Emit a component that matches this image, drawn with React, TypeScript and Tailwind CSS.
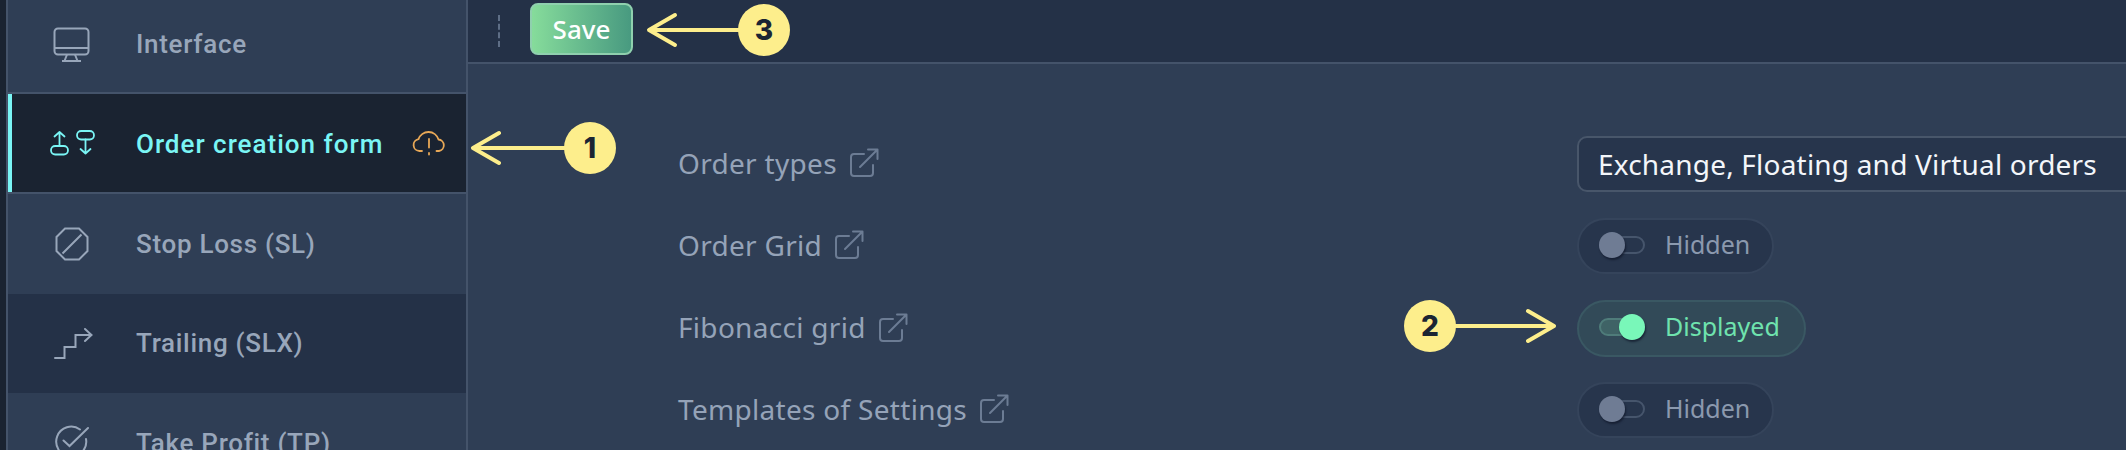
import React from 'react';

const MonitorIcon = () => (
  <svg width="38" height="36" viewBox="0 0 38 36" fill="none" stroke="currentColor" strokeWidth="2" strokeLinejoin="round">
    <rect x="1.500" y="1.500" width="34" height="26" rx="3.500" />
    <path d="M1.500 21h34M14 27.500l-2.500 6.500h13l-2.500-6.500M9 34h19" />
  </svg>
);

const OrderIcon = () => (
  <svg width="46" height="26" viewBox="0 0 46 26" fill="none" stroke="currentColor" strokeWidth="1.800" strokeLinecap="round" strokeLinejoin="round">
    <rect x="1" y="16" width="17" height="8.500" rx="4.200" />
    <path d="M9.500 16V2M4.500 6.500l5-4.500 5 4.500" />
    <rect x="27" y="1" width="17" height="8.500" rx="4.200" />
    <path d="M35.500 9.500V23.500M30.500 19l5 4.500 5-4.500" />
  </svg>
);

const StopIcon = () => (
  <svg width="34" height="34" viewBox="0 0 34 34" fill="none" stroke="currentColor" strokeWidth="2">
    <path d="M10 1.500h14l8.500 8.500v14L24 32.500H10L1.500 24V10zM7.500 26.500l19-19" />
  </svg>
);

const TrailingIcon = () => (
  <svg width="40" height="32" viewBox="0 0 40 32" fill="none" stroke="currentColor" strokeWidth="2" strokeLinecap="round">
    <path d="M1 30h9.500V19h11V7H37M31 1l6.500 6L31 13" />
  </svg>
);

const TakeProfitIcon = () => (
  <svg width="36" height="36" viewBox="0 0 36 36" fill="none" stroke="currentColor" strokeWidth="2" strokeLinecap="round">
    <path d="M26 4.500A15 15 0 1 0 32 14M9.500 15.500l6 5.500L34 3" />
  </svg>
);

const CloudWarnIcon = () => (
  <svg width="34" height="26" viewBox="0 0 34 26" fill="none" stroke="currentColor" strokeWidth="1.800" strokeLinecap="round" strokeLinejoin="round">
    <path d="M10 21H7.500a6 6 0 0 1-1-11.900A10.500 10.500 0 0 1 26.500 9.500 5.800 5.800 0 0 1 27 21h-2.500" />
    <path d="M17 9v8.500M17 23v1.500" />
  </svg>
);

const LinkIcon = () => (
  <svg className="shrink-0 text-[#6c7c94]" width="29" height="29" viewBox="0 0 29 29" fill="none" stroke="currentColor" strokeWidth="2" strokeLinecap="round" strokeLinejoin="round">
    <path d="M14 6H4a3 3 0 0 0-3 3v16a3 3 0 0 0 3 3h16a3 3 0 0 0 3-3V17" />
    <path d="M10 19L27.500 1.500M18 1.500h9.500V11" />
  </svg>
);

const Badge = ({ value, className }: { value: string; className: string }) => (
  <div className={`absolute flex h-[52px] w-[52px] items-center justify-center rounded-full bg-[#fdee8c] font-['Inter',sans-serif] text-[28px] font-extrabold text-[#1b2533] ${className}`}>
    {value}
  </div>
);

const SideRow = ({
  icon,
  label,
  dark,
  extraClass,
}: {
  icon: React.ReactNode;
  label: string;
  dark?: boolean;
  extraClass: string;
}) => (
  <div className={`flex items-center ${extraClass} ${dark ? 'bg-[#243147]' : ''}`}>
    <div className="flex w-[128px] shrink-0 justify-center pr-[1px] text-[#98a6ba]">{icon}</div>
    <span className="text-[26px] font-medium tracking-[0.7px] text-[#98a6ba]">{label}</span>
  </div>
);

const Toggle = ({ on }: { on?: boolean }) => (
  <div
    className={`flex items-center rounded-full border-2 pb-[3px] pl-[20px] ${
      on ? 'h-[57px] w-[229px] border-[#3a5863] bg-[#324a58]' : 'h-[56px] w-[197px] border-[#35445b] bg-[#27354c]'
    }`}
  >
    <div className={`relative h-[18px] w-[46px] rounded-full border-2 ${on ? 'border-[#4f7c7a] bg-[#3f6366]' : 'border-[#46556c]'}`}>
      <div
        className={`absolute top-[-6px] h-[26px] w-[26px] rounded-full shadow-[1px_2px_2px_rgba(15,23,42,0.7)] ${
          on ? 'right-[-2px] bg-[#79f7b9]' : 'left-[-2px] bg-[#6f7c94]'
        }`}
      />
    </div>
    <span className={`ml-[20px] text-[25px] ${on ? 'text-[#6fe3ae]' : 'text-[#8b99ae]'}`}>{on ? 'Displayed' : 'Hidden'}</span>
  </div>
);

const SettingRow = ({ label, children }: { label: string; children: React.ReactNode }) => (
  <div className="flex items-center">
    <div className="flex w-[899px] shrink-0 items-center gap-[13px] pb-[3px] text-[28px] tracking-[0.3px] text-[#95a3b8]">
      <span>{label}</span>
      <LinkIcon />
    </div>
    {children}
  </div>
);

export default function App() {
  return (
    <div className="relative flex h-[450px] w-[2126px] overflow-hidden bg-[#2f3e55] font-['Noto_Sans',sans-serif]">
      <div className="w-[6px] shrink-0 bg-[#1a2331]" />

      <aside className="w-[462px] shrink-0 border-x-2 border-[#44536a] font-['Roboto',sans-serif]">
        <SideRow icon={<MonitorIcon />} label="Interface" extraClass="h-[92px] pb-[3px]" />
        <div className="flex h-[102px] items-center border-y-2 border-[#44536a] bg-[#1a2331]">
          <div className="h-full w-[4px] shrink-0 bg-[#7af5f5]" />
          <div className="flex w-[124px] shrink-0 justify-center pr-[3px] text-[#7af5f5]">
            <OrderIcon />
          </div>
          <span className="pt-[2px] text-[26px] font-medium tracking-[1px] text-[#7af5f5]">Order creation form</span>
          <span className="ml-auto pr-[20px] text-[#e8a857]">
            <CloudWarnIcon />
          </span>
        </div>
        <SideRow icon={<StopIcon />} label="Stop Loss (SL)" extraClass="h-[100px]" />
        <SideRow icon={<span className="pl-[4px]"><TrailingIcon /></span>} label="Trailing (SLX)" dark extraClass="h-[99px]" />
        <SideRow icon={<TakeProfitIcon />} label="Take Profit (TP)" extraClass="h-[100px]" />
      </aside>

      <main className="min-w-0 flex-1">
        <div className="flex h-[64px] items-center border-b-2 border-[#44536a] bg-[#243147] pl-[30px]">
          <div className="h-[32px] border-l-2 border-dashed border-[#5e6e86]" />
          <button className="ml-[30px] mb-[4px] h-[52px] w-[103px] rounded-[8px] border-2 border-[#8fd0ae] bg-gradient-to-r from-[#86dc9b] to-[#489a80] text-[26px] font-medium text-white">
            Save
          </button>
        </div>

        <div className="flex flex-col gap-[26px] pt-[72px] pl-[210px]">
          <SettingRow label="Order types">
            <div className="flex h-[56px] w-[560px] shrink-0 items-center rounded-[10px] border-2 border-[#48566a] bg-[#27354c] pl-[19px] text-[28px] tracking-[0.2px] text-[#f3f6fa]">
              Exchange, Floating and Virtual orders
            </div>
          </SettingRow>
          <SettingRow label="Order Grid">
            <Toggle />
          </SettingRow>
          <SettingRow label="Fibonacci grid">
            <Toggle on />
          </SettingRow>
          <div className="-mt-[1px]">
            <SettingRow label="Templates of Settings">
              <Toggle />
            </SettingRow>
          </div>
        </div>
      </main>

      {/* annotation arrows */}
      <svg className="absolute left-0 top-0 text-[#fdee8c]" width="2126" height="450" fill="none" stroke="currentColor" strokeWidth="4" strokeLinecap="round" strokeLinejoin="round">
        <path d="M570 148H475M499 133l-26 15 26 15" />
        <path d="M744 30H651M675 15l-26 15 26 15" />
        <path d="M1450 326H1552M1528 311l26 15-26 15" />
      </svg>
      <Badge value="1" className="left-[564px] top-[122px]" />
      <Badge value="3" className="left-[738px] top-[4px]" />
      <Badge value="2" className="left-[1404px] top-[300px]" />
    </div>
  );
}
